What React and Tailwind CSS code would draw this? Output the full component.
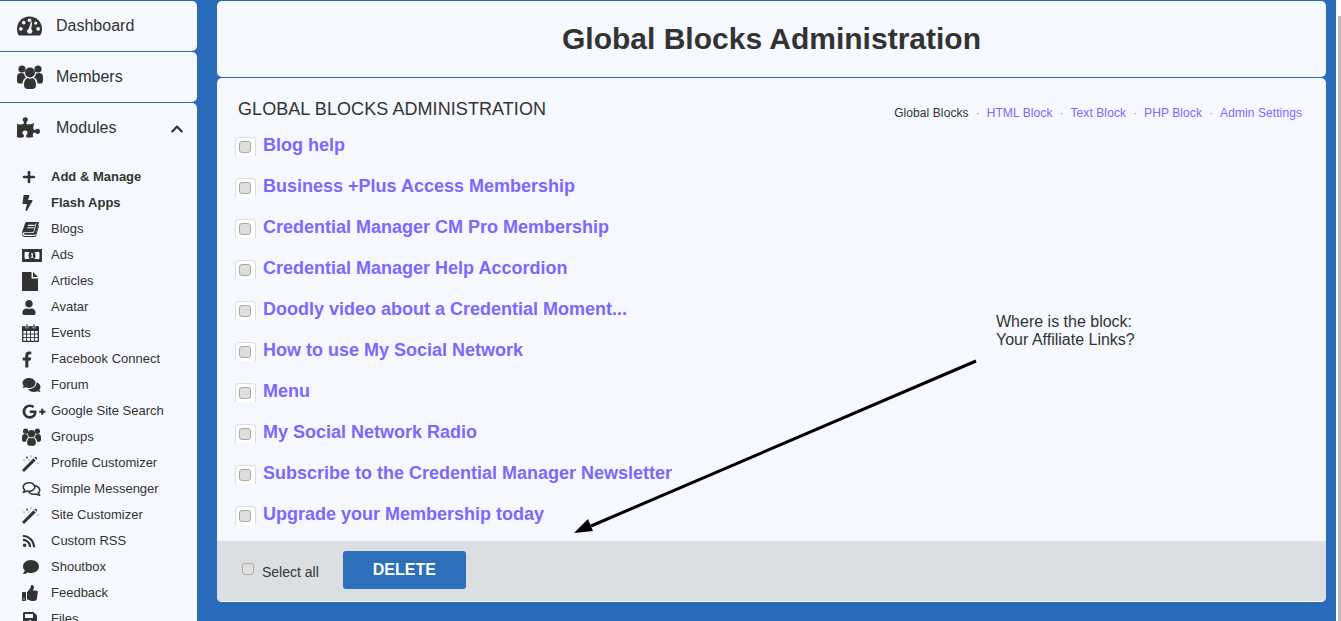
import {
    FaPuzzlePiece, FaChevronUp, FaPlus, FaBolt, FaFacebookF, FaComments, FaGooglePlusG, FaRegComments, FaRss, FaComment, FaThumbsUp, FaSave, FaUser,
} from 'react-icons/fa';

const GaugeIcon = ({ className }) => (
    <svg className={className} viewBox="0 0 26 20" fill="currentColor">
        <path d="M13 0a13 13 0 0 1 13 13c0 2.5-.7 4.8-2 7H2c-1.3-2.2-2-4.5-2-7A13 13 0 0 1 13 0z" />
        <g fill="#f5f8ff">
            <circle cx="4" cy="13" r="1.9" />
            <circle cx="7" cy="6.5" r="1.9" />
            <circle cx="13" cy="4" r="1.9" />
            <circle cx="22" cy="13" r="1.9" />
            <circle cx="19.5" cy="7" r="1.6" />
            <path d="M10.5 15.5c0-1.3 1-2.2 1.8-2.6L14.6 5.5l1.2.3-1 7.4c.7.6 1.2 1.4 1.2 2.3 0 1.6-1.1 2.5-2.8 2.5s-2.7-.9-2.7-2.5z" />
        </g>
    </svg>
);

const UsersIcon = ({ className }) => (
    <svg className={className} viewBox="0 0 26 24" fill="currentColor">
        <circle cx="5" cy="4" r="3.6" />
        <circle cx="21" cy="4" r="3.6" />
        <path d="M0 15v-3c0-2.5 1.5-4 4-4l3 .5c.5 2 1 3 2 4-2 1-3.5 3-3.5 6H2c-1.5 0-2-1.5-2-3.5z" />
        <path d="M26 15v-3c0-2.5-1.500-4-4-4l-3 .5c-.5 2-1 3-2 4 2 1 3.500 3 3.500 6H24c1.500 0 2-1.500 2-3.500z" />
        <circle cx="13" cy="7.500" r="5" />
        <path d="M7 20c0-4 1.500-6.500 3.500-7 1.500 1 3.500 1 5 0 2 .5 3.500 3 3.500 7 0 2.500-1.500 4-3.500 4h-5C8.500 24 7 22.500 7 20z" />
    </svg>
);

const BookIcon = ({ className }) => (
    <svg className={className} viewBox="0 0 18 16" fill="currentColor">
        <path d="M5 0h12.500c.4 0 .6.300.5.700l-3.300 11.800c-.2.700-.6 1-1.300 1H3c-.7 0-1-.4-1-.9s.4-.8 1-.8h9.500l3-10.500-.8 0L11.800 11H2.500C1.500 11 .8 11.600.5 12.500L0 12.300V11L3.200 1.300C3.500.500 4.100 0 5 0z" />
        <path d="M.3 12.500c-.5 1.800.6 3.500 2.400 3.500h10.600c.9 0 1.600-.5 1.900-1.500l3-10.300-.9-.3-3 10.300c-.1.500-.4.800-1 .8H2.800c-1.200 0-1.900-.8-1.600-2z" />
        <path d="M6.500 3h7l-.3 1.200h-7zM5.800 5.500h7l-.3 1.200h-7z" fill="#f5f8ff" />
    </svg>
);

const MoneyIcon = ({ className }) => (
    <svg className={className} viewBox="0 0 20 13" fill="currentColor">
        <path fillRule="evenodd" d="M0 0h20v13H0zM3 2.500 2.500 5v3L3 10.500h14l.5-2.500V5L17 2.500z" />
        <path d="M3.500 2h13v1h-13zM3.500 10h13v1h-13z" />
        <ellipse cx="10" cy="6.500" rx="3.500" ry="4.200" />
        <path d="M9.600 4h1.200v4.200h.8V9H8.600v-.8h1V5.200h-.9z" fill="#f5f8ff" />
    </svg>
);

const FileIcon = ({ className }) => (
    <svg className={className} viewBox="0 0 16 19" fill="currentColor">
        <path d="M0 0h9.500v6.500H16V19H0z" />
        <path d="M11 0l5 5h-5z" />
    </svg>
);

const CalendarIcon = ({ className }) => (
    <svg className={className} viewBox="0 0 17 18" fill="none" stroke="currentColor">
        <path d="M.7 3h15.600v14.300H.7z" strokeWidth="1.300" />
        <path d="M.7 3h15.600v3.500H.7z" fill="currentColor" />
        <path d="M.7 10h15.600M.7 13.500h15.600M4.500 6.500v11M8.500 6.500v11M12.500 6.500v11" strokeWidth=".9" />
        <path d="M5 .8v3.500M12 .8v3.500" stroke="#f5f8ff" strokeWidth="2.600" />
        <path d="M5 .5v3.500M12 .5v3.500" strokeWidth="1.300" />
    </svg>
);

const WandIcon = ({ className }) => (
    <svg className={className} viewBox="0 0 17 17" fill="currentColor">
        <path d="M2 17 0 15 12.500 2.300a1.400 1.400 0 0 1 2.200 2.200z" />
        <path d="M11.500 3.300l2.200 2.200.9-.9-2.200-2.200z" fill="#f5f8ff" />
        <circle cx="5" cy="2.500" r=".9" />
        <circle cx="9" cy="1" r=".6" />
        <circle cx="2" cy="5" r=".6" />
        <circle cx="7" cy="5" r=".6" />
        <circle cx="16" cy="8" r=".6" />
    </svg>
);

const modules = [
    { name: 'Add & Manage', icon: FaPlus, size: 'w-[14px] h-[14px]', bold: true },
    { name: 'Flash Apps', icon: FaBolt, size: 'w-[11px] h-[16px]', bold: true },
    { name: 'Blogs', icon: BookIcon, size: 'w-[17px] h-[15px]' },
    { name: 'Ads', icon: MoneyIcon, size: 'w-[20px] h-[13px]' },
    { name: 'Articles', icon: FileIcon, size: 'w-[16px] h-[19px]' },
    { name: 'Avatar', icon: FaUser, size: 'w-[14px] h-[15px]' },
    { name: 'Events', icon: CalendarIcon, size: 'w-[17px] h-[18px]' },
    { name: 'Facebook Connect', icon: FaFacebookF, size: 'w-[10px] h-[17px]' },
    { name: 'Forum', icon: FaComments, size: 'w-[19px] h-[16px]' },
    { name: 'Google Site Search', icon: FaGooglePlusG, size: 'w-[24px] h-[19px]' },
    { name: 'Groups', icon: UsersIcon, size: 'w-[19px] h-[18px]' },
    { name: 'Profile Customizer', icon: WandIcon, size: 'w-[17px] h-[17px]' },
    { name: 'Simple Messenger', icon: FaRegComments, size: 'w-[19px] h-[16px]' },
    { name: 'Site Customizer', icon: WandIcon, size: 'w-[17px] h-[17px]' },
    { name: 'Custom RSS', icon: FaRss, size: 'w-[14px] h-[14px]' },
    { name: 'Shoutbox', icon: FaComment, size: 'w-[18px] h-[16px]' },
    { name: 'Feedback', icon: FaThumbsUp, size: 'w-[16px] h-[16px]' },
    { name: 'Files', icon: FaSave, size: 'w-[16px] h-[16px]' },
];

const blocks = [
    'Blog help',
    'Business +Plus Access Membership',
    'Credential Manager CM Pro Membership',
    'Credential Manager Help Accordion',
    'Doodly video about a Credential Moment...',
    'How to use My Social Network',
    'Menu',
    'My Social Network Radio',
    'Subscribe to the Credential Manager Newsletter',
    'Upgrade your Membership today',
];

const tabs = ['HTML Block', 'Text Block', 'PHP Block', 'Admin Settings'];

const Check = ({ className = '' }) => (
    <input type="checkbox" className={`appearance-none block w-[12px] h-[12px] rounded-[3px] bg-[#dedede] border border-[#a8a8a8] ${className}`} />
);

const App = () => {
    return (
        <div className="relative h-[621px] overflow-hidden bg-[#286cb9] flex text-[#333] font-['Liberation_Sans',Arial,sans-serif]">

            <div className="w-[197px] shrink-0 flex flex-col gap-px pt-px">
                <div className="h-[50px] shrink-0 bg-[#f5f8ff] rounded-r-[5px] flex items-center pl-[17px] pb-px text-base">
                    <GaugeIcon className="w-[25px] h-[20px] mr-[14px]" />
                    <span>Dashboard</span>
                </div>
                <div className="h-[50px] shrink-0 bg-[#f5f8ff] rounded-r-[5px] flex items-center pl-[17px] pb-px text-base">
                    <UsersIcon className="w-[26px] h-[24px] mr-[13px]" />
                    <span>Members</span>
                </div>
                <div className="flex-1 bg-[#f5f8ff] rounded-r-[5px]">
                    <div className="h-[50px] flex items-center pl-[17px] pr-[11px] pb-px text-base">
                        <FaPuzzlePiece className="w-[23px] h-[23px] mr-[16px]" />
                        <span className="flex-1">Modules</span>
                        <FaChevronUp className="w-[18px] h-[14px] mt-[3px]" />
                    </div>
                    <div className="pt-[11px] flex flex-col">
                        {
                            modules.map((m) => {
                                const Icon = m.icon;
                                return (
                                    <div key={m.name} className="h-[26px] flex items-center pl-[22px] text-[13px] shrink-0">
                                        <span className="w-[29px] flex items-center">
                                            <Icon className={m.size} />
                                        </span>
                                        <span className={m.bold ? 'font-bold' : ''}>{m.name}</span>
                                    </div>
                                )
                            })
                        }
                    </div>
                </div>
            </div>

            <div className="w-[1109px] ml-[20px] shrink-0 flex flex-col gap-px pt-px h-[602px]">
                <div className="h-[76px] shrink-0 bg-[#f5f8ff] rounded-[5px] flex items-center justify-center pb-[2px]">
                    <h1 className="text-[30px] font-bold">Global Blocks Administration</h1>
                </div>

                <div className="flex-1 bg-[#f5f8ff] rounded-[5px] flex flex-col overflow-hidden">
                    <div className="flex-1 pl-[18px] pr-[24px] pt-[21px]">
                        <div className="flex justify-between items-center h-[20px] pl-[3px]">
                            <h2 className="text-lg uppercase tracking-[0.07px]">Global Blocks Administration</h2>
                            <div className="flex items-center text-xs tracking-[0.09px] mt-[7px]">
                                <span>Global Blocks</span>
                                {
                                    tabs.map((t) => {
                                        return (
                                            <span key={t} className="flex items-center">
                                                <span className="w-[18px] text-center text-[#999]">·</span>
                                                <a className="text-[#7b68ff]">{t}</a>
                                            </span>
                                        )
                                    })
                                }
                            </div>
                        </div>
                        <div className="flex flex-col mt-[7px]">
                            {
                                blocks.map((b) => {
                                    return (
                                        <div key={b} className="h-[41px] flex items-start">
                                            <span className="w-[21px] h-[19px] mt-[11px] bg-white border border-b-0 border-[#ddd] rounded-t-[4px] flex items-center justify-center pr-px">
                                                <Check />
                                            </span>
                                            <a className="ml-[7px] mt-[5px] text-lg font-bold text-[#7b68ff]">{b}</a>
                                        </div>
                                    )
                                })
                            }
                        </div>
                    </div>
                    <div className="h-[61px] shrink-0 bg-[#dcdfe1] border-b border-white flex items-center pl-[25px]">
                        <Check className="mb-[5px]" />
                        <span className="ml-[8px] mt-px text-sm">Select all</span>
                        <button className="ml-[24px] w-[123px] h-[38px] mb-[2px] bg-[#2c6fba] rounded-[3px] text-white font-bold text-base">DELETE</button>
                    </div>
                </div>
            </div>

            <div className="absolute right-0 top-0 w-[5px] h-full bg-white">
                <div className="mt-[16px] ml-[2px] h-full bg-[#bdbdbd]"></div>
            </div>

            <p className="absolute left-[996px] top-[313px] text-base leading-[18px] text-[#333]">
                Where is the block:<br />Your Affiliate Links?
            </p>
            <svg className="absolute left-[570px] top-[355px]" width="410" height="182" viewBox="0 0 410 182">
                <line x1="406" y1="6" x2="21" y2="171" stroke="#000" strokeWidth="3" />
                <polygon points="4,178 18,164 23,176" fill="#000" />
            </svg>
        </div>
    )
}

export default App;
